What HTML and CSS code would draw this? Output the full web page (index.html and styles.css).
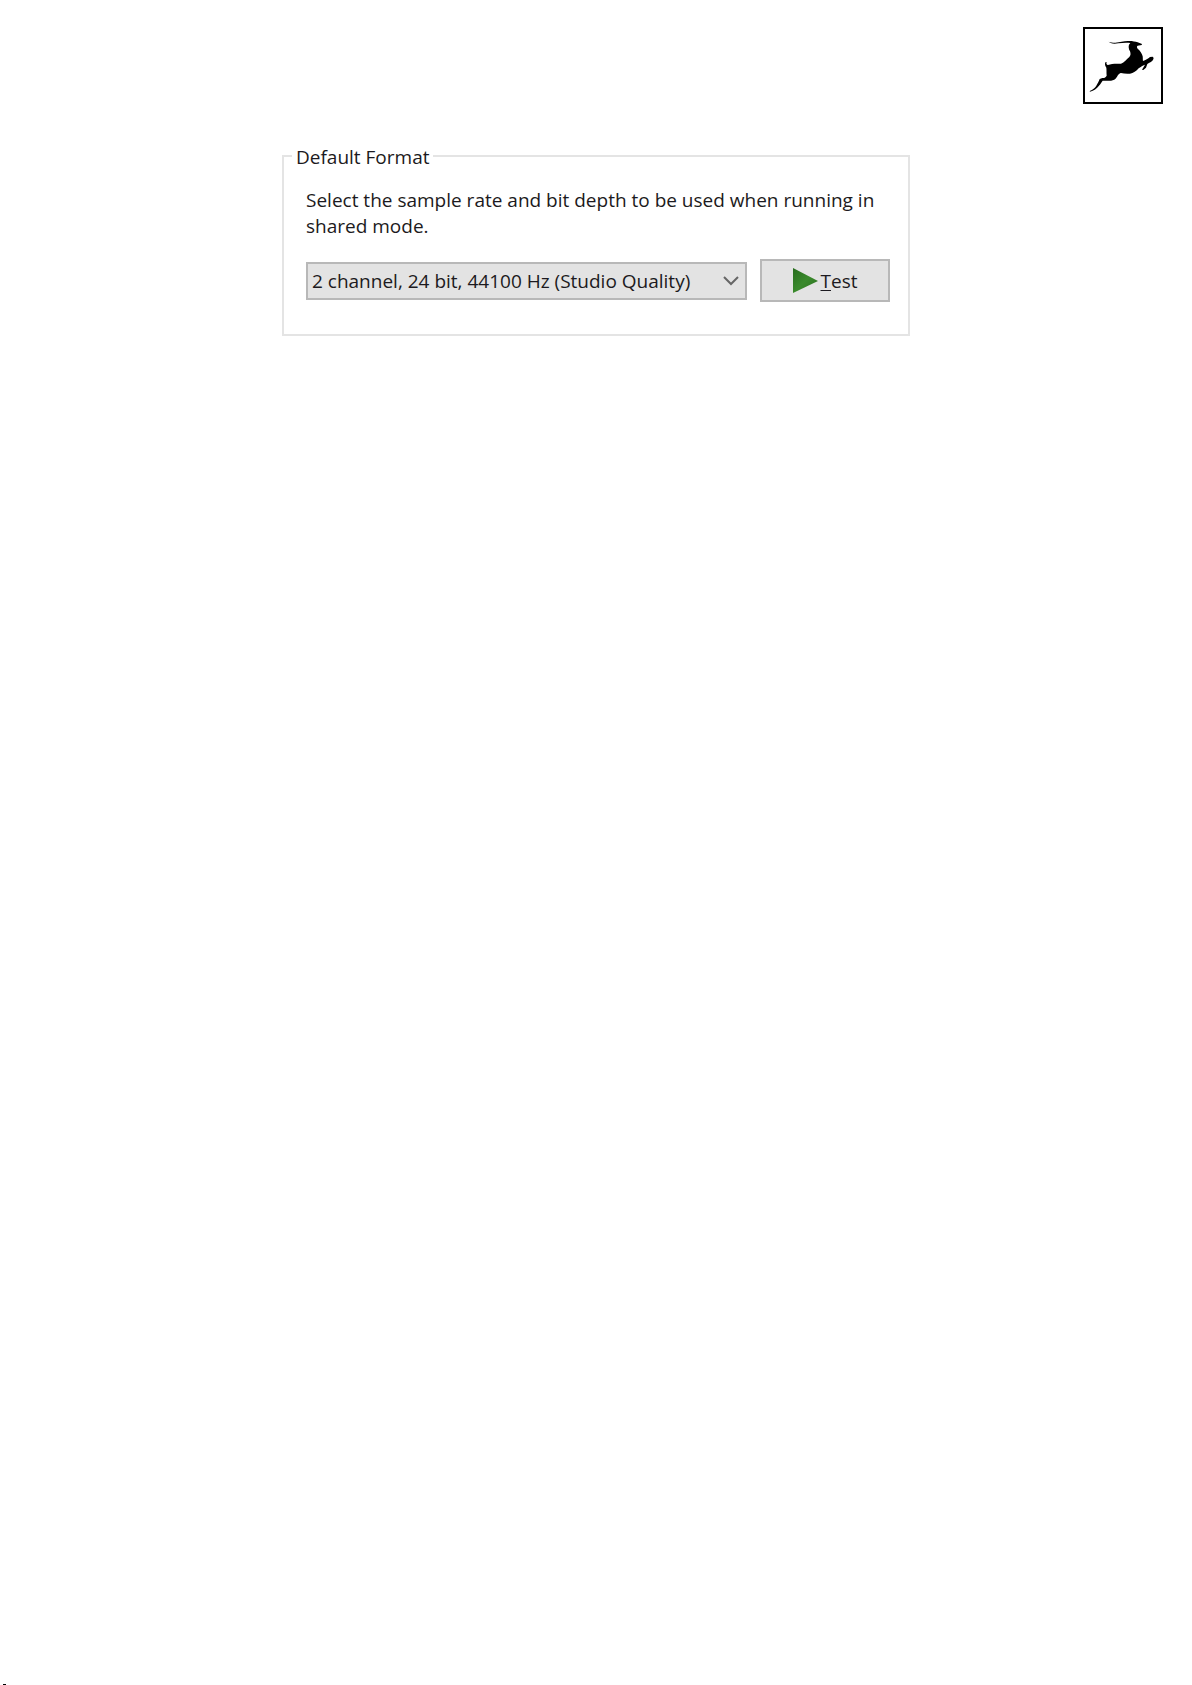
FILE: index.html
```html
<!DOCTYPE html>
<html lang="en">
<head>
  <meta charset="UTF-8" />
  <meta name="viewport" content="width=device-width, initial-scale=1.0" />
  <title>Default Format</title>
  <link rel="stylesheet" href="styles.css">
</head>
<body>
  <header class="page-header">
    <svg class="logo" viewBox="39 39 228 219" role="img" aria-label="Antelope logo">
      <path d="M109 76 C113 80 120 81 130 80 C145 79 156 74 172 75 C182 75 190 77 197 79 L210 84 L209 87 L197 89 C194 91 194 94 197 98 C204 104 210 112 212 121 C213 127 212 132 213 135 C221 133 228 128 234 123 L242 122 L245 126 L243 132 C239 138 232 140 226 144 L222 155 L214 162 L210 161 L215 153 L219 146 C211 149 205 153 200 157 C193 165 184 172 174 173 C164 174 155 173 147 171 C138 173 137 182 130 189 C125 194 115 195 105 194 L92 194 C88 199 86 204 81 209 C74 217 66 224 54 227 L53 225 C63 221 68 216 73 209 C78 201 80 196 83 189 L91 186 C97 187 101 183 104 179 C103 170 104 161 103 155 C99 150 98 144 100 139 L104 138 C102 143 104 147 108 147 C118 142 133 143 147 143 C157 139 164 130 172 123 C177 118 176 112 174 106 C170 99 169 91 171 86 L175 81 C165 79 151 80 139 82 C126 84 113 83 109 76 Z" />
    </svg>
  </header>

  <main>
    <fieldset class="format-group">
      <legend>Default Format</legend>
      <div class="format-body">
        <label for="format">Select the sample rate and bit depth to be used when running in shared mode.</label>
        <div class="controls">
          <div class="select-wrap">
            <select id="format">
              <option>2 channel, 24 bit, 44100 Hz (Studio Quality)</option>
            </select>
            <svg class="chevron" viewBox="0 0 16 10"><path d="M1 1 L8 8 L15 1" /></svg>
          </div>
          <button type="button" class="test-button" accesskey="t">
            <svg class="play" viewBox="0 0 25 25">
              <defs>
                <linearGradient id="play-fill" x1="0" y1="0" x2="1" y2="1">
                  <stop offset="0" stop-color="#276c1d" />
                  <stop offset="0.5" stop-color="#3a8a2c" />
                  <stop offset="1" stop-color="#2b701f" />
                </linearGradient>
              </defs>
              <path d="M0 0 L25 13 L0 25 Z" fill="url(#play-fill)" />
            </svg>
            <span><u>T</u>est</span>
          </button>
        </div>
      </div>
    </fieldset>
  </main>

  <footer class="page-footer">
    <div class="mark"></div>
  </footer>
</body>
</html>
```

FILE: styles.css
```css
* {
  box-sizing: border-box;
}
body {
  display: flex;
  flex-direction: column;
  min-height: 100vh;
  margin: 0;
  background-color: #fff;
  color: #1c1a20;
  font-family: 'Open Sans', 'Noto Sans', sans-serif;
  font-size: 19px;
  line-height: 26px;
}
.page-header {
  display: flex;
  justify-content: flex-end;
  padding: 27px 29px 0;
}
.logo {
  width: 80px;
  height: 77px;
  border: 2px solid #000;
}
main {
  flex: 1;
  padding: 38px 20px;
}
.format-group {
  max-width: 628px;
  margin: 0 auto;
  padding: 0 8px 32px;
  border: 2px solid #e4e4e4;
}
legend {
  padding: 2px 4px 0;
}
.format-body {
  padding: 17px 10px 0 14px;
}
.format-body label {
  display: block;
}
.controls {
  display: flex;
  align-items: center;
  gap: 13px;
  margin-top: 20px;
}
.select-wrap {
  position: relative;
  flex: 1;
}
select {
  display: block;
  width: 100%;
  height: 38px;
  padding: 0 40px 0 4px;
  border: 2px solid #b8b8b8;
  border-radius: 0;
  background-color: #e3e3e3;
  color: inherit;
  font: inherit;
  appearance: none;
}
.chevron {
  position: absolute;
  top: 14px;
  right: 8px;
  width: 16px;
  height: 10px;
  fill: none;
  stroke: #666;
  stroke-width: 2;
  pointer-events: none;
}
.test-button {
  display: flex;
  align-items: center;
  justify-content: center;
  gap: 3px;
  width: 130px;
  height: 43px;
  padding: 0;
  border: 2px solid #b8b8b8;
  background-color: #e3e3e3;
  color: inherit;
  font: inherit;
}
.test-button u {
  text-underline-offset: 2px;
}
.play {
  width: 25px;
  height: 25px;
}
.page-footer {
  padding-left: 3px;
}
.mark {
  width: 3px;
  height: 1px;
  background-color: #000;
}
```
